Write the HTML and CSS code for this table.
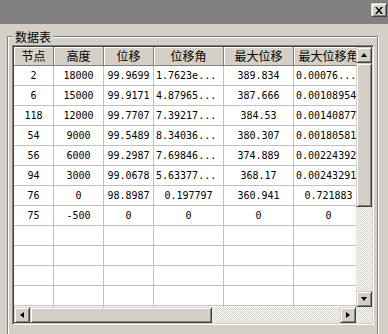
FILE: index.html
```html
<!DOCTYPE html>
<html lang="zh-CN">
<head>
<meta charset="utf-8">
<title>数据表</title>
<link rel="stylesheet" href="styles.css">
</head>
<body>
<div class="window">
  <div class="titlebar">
    <button class="btn3d close" type="button" aria-label="关闭">
      <svg width="8" height="7" viewBox="0 0 8 7"><path d="M0 0h2l2 2.5 2-2.5h2l-3 3.5 3 3.5h-2l-2-2.5-2 2.5h-2l3-3.5z" fill="#000"/></svg>
    </button>
  </div>
  <div class="client">
    <div class="group">
      <div class="group-label">数据表</div>
      <div class="grid">
        <div class="grid-body">
          <table class="sheet">
            <colgroup>
              <col class="c40"><col class="c50"><col class="c50"><col class="c70"><col class="c70"><col class="c70">
            </colgroup>
            <thead>
              <tr><th>节点</th><th>高度</th><th>位移</th><th>位移角</th><th>最大位移</th><th>最大位移角</th></tr>
            </thead>
            <tbody>
              <tr><td>2</td><td>18000</td><td>99.9699</td><td class="lt">1.7623e...</td><td>389.834</td><td class="lt">0.00076...</td></tr>
              <tr><td>6</td><td>15000</td><td>99.9171</td><td class="lt">4.87965...</td><td>387.666</td><td class="lt">0.00108954</td></tr>
              <tr><td>118</td><td>12000</td><td>99.7707</td><td class="lt">7.39217...</td><td>384.53</td><td class="lt">0.00140877</td></tr>
              <tr><td>54</td><td>9000</td><td>99.5489</td><td class="lt">8.34036...</td><td>380.307</td><td class="lt">0.00180581</td></tr>
              <tr><td>56</td><td>6000</td><td>99.2987</td><td class="lt">7.69846...</td><td>374.889</td><td class="lt">0.00224392</td></tr>
              <tr><td>94</td><td>3000</td><td>99.0678</td><td class="lt">5.63377...</td><td>368.17</td><td class="lt">0.00243291</td></tr>
              <tr><td>76</td><td>0</td><td>98.8987</td><td>0.197797</td><td>360.941</td><td>0.721883</td></tr>
              <tr><td>75</td><td>-500</td><td>0</td><td>0</td><td>0</td><td>0</td></tr>
              <tr><td></td><td></td><td></td><td></td><td></td><td></td></tr>
              <tr><td></td><td></td><td></td><td></td><td></td><td></td></tr>
              <tr><td></td><td></td><td></td><td></td><td></td><td></td></tr>
              <tr><td></td><td></td><td></td><td></td><td></td><td></td></tr>
              <tr><td></td><td></td><td></td><td></td><td></td><td></td></tr>
            </tbody>
          </table>
        </div>
        <div class="vscroll">
          <div class="btn3d sb-btn"><span class="arrow up"></span></div>
          <div class="btn3d thumb-v"></div>
          <div class="track"></div>
          <div class="btn3d sb-btn"><span class="arrow down"></span></div>
        </div>
        <div class="hscroll">
          <div class="btn3d sb-btn"><span class="arrow left"></span></div>
          <div class="btn3d thumb-h"></div>
          <div class="track"></div>
          <div class="btn3d sb-btn"><span class="arrow right"></span></div>
        </div>
        <div class="corner"></div>
      </div>
    </div>
  </div>
</div>
</body>
</html>
```

FILE: styles.css
```css
html, body {
  margin: 0;
  padding: 0;
  background: #d4d0c8;
}

body {
  width: 388px;
  height: 334px;
  overflow: hidden;
  font-family: "Noto Sans CJK SC", "Noto Sans", sans-serif;
  font-size: 12px;
  color: #000;
}

/* raised 3D face used by buttons, thumbs */
.btn3d {
  box-sizing: border-box;
  background: #d4d0c8;
  border: 1px solid;
  border-color: #d4d0c8 #404040 #404040 #d4d0c8;
  box-shadow: inset 1px 1px #fff, inset -1px -1px #808080;
  padding: 0;
  margin: 0;
}

.titlebar {
  height: 24px;
  background: #808080;
  display: flex;
  justify-content: flex-end;
  align-items: flex-start;
  padding: 3px 1px 0 0;
  box-sizing: border-box;
}

.close {
  width: 16px;
  height: 14px;
  display: flex;
  align-items: center;
  justify-content: center;
}

.close svg {
  display: block;
}

.client {
  padding: 12px 0 0 7px;
}

/* etched group frame */
.group {
  position: relative;
  box-sizing: border-box;
  width: 371px;
  height: 300px;
  border: 1px solid #808080;
  box-shadow: inset 1px 1px #fff, 1px 1px #fff;
  padding: 8px 0 0 4px;
}

.group-label {
  position: absolute;
  top: -7px;
  left: 5px;
  padding: 0 2px;
  background: #d4d0c8;
  line-height: 13px;
  font-size: 12px;
}

/* sunken grid control */
.grid {
  box-sizing: border-box;
  width: 362px;
  height: 280px;
  border: 1px solid;
  border-color: #808080 #fff #fff #808080;
  box-shadow: inset 1px 1px #404040, inset -1px -1px #d4d0c8;
  padding: 1px;
  display: grid;
  grid-template-columns: 342px 16px;
  grid-template-rows: 260px 16px;
}

.grid-body {
  overflow: hidden;
  background: #fff;
}

.sheet {
  border-collapse: separate;
  border-spacing: 0;
  table-layout: fixed;
  width: 350px;
}

.c40 { width: 40px; }
.c50 { width: 50px; }
.c70 { width: 70px; }

.sheet th {
  box-sizing: border-box;
  height: 19px;
  padding: 0;
  background: #d4d0c8;
  border-right: 1px solid #808080;
  border-bottom: 1px solid #808080;
  box-shadow: inset 1px 1px #fff;
  font-weight: normal;
  font-size: 12px;
  line-height: 18px;
  text-align: center;
  white-space: nowrap;
  overflow: hidden;
}

.sheet td {
  box-sizing: border-box;
  height: 20px;
  padding: 0;
  border-right: 1px solid #c0c0c0;
  border-bottom: 1px solid #c0c0c0;
  font-family: "DejaVu Sans Mono", "Liberation Mono", monospace;
  font-size: 10px;
  line-height: 19px;
  text-align: center;
  white-space: nowrap;
  overflow: hidden;
}

.sheet td.lt {
  text-align: left;
  padding-left: 2px;
}

.vscroll {
  display: flex;
  flex-direction: column;
}

.hscroll {
  display: flex;
}

.sb-btn {
  width: 16px;
  height: 16px;
  flex: none;
  display: flex;
  align-items: center;
  justify-content: center;
}

.thumb-v {
  height: 144px;
  flex: none;
}

.thumb-h {
  width: 182px;
  flex: none;
}

.track,
.corner {
  flex: 1;
  background: repeating-conic-gradient(#d4d0c8 0 25%, #fff 0 50%) 0 0 / 2px 2px;
}

.arrow {
  width: 0;
  height: 0;
  border: 0 solid transparent;
}

.arrow.up {
  border-width: 0 3.5px 4px;
  border-bottom-color: #000;
}

.arrow.down {
  border-width: 4px 3.5px 0;
  border-top-color: #000;
}

.arrow.left {
  border-width: 3.5px 4px 3.5px 0;
  border-right-color: #000;
}

.arrow.right {
  border-width: 3.5px 0 3.5px 4px;
  border-left-color: #000;
}
```
